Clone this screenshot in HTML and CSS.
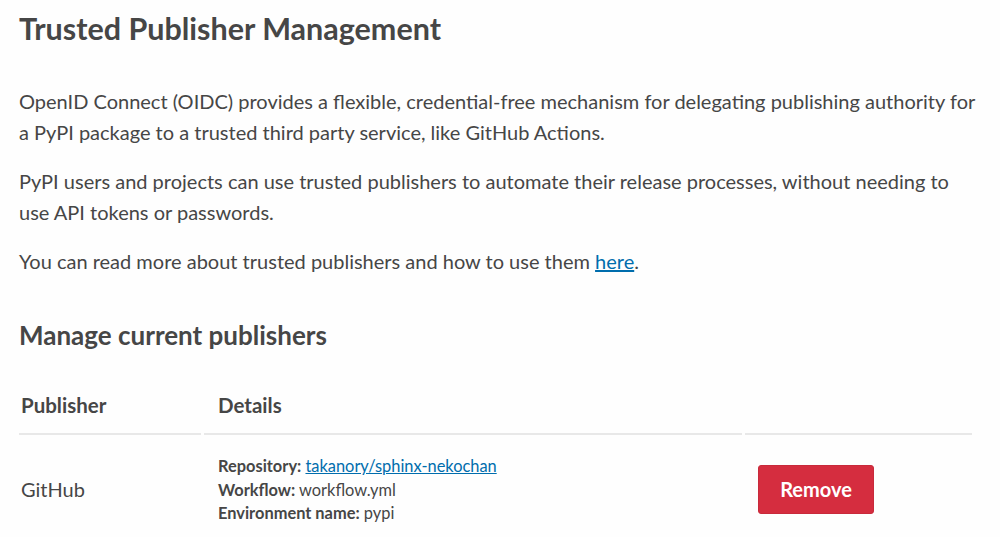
FILE: index.html
```html
<!DOCTYPE html>
<html>
<head>
<meta charset="utf-8">
<link rel="stylesheet" href="styles.css">
</head>
<body>
<main class="page">
  <h1 class="title">Trusted Publisher Management</h1>
  <p class="text">OpenID Connect (OIDC) provides a flexible, credential-free mechanism for delegating publishing authority for a PyPI package to a trusted third party service, like GitHub Actions.</p>
  <p class="text">PyPI users and projects can use trusted publishers to automate their release processes, without needing to use API tokens or passwords.</p>
  <p class="text">You can read more about trusted publishers and how to use them <a class="link" href="#">here</a>.</p>
  <h2 class="subtitle">Manage current publishers</h2>
  <table class="table">
    <thead>
      <tr>
        <th class="col-pub">Publisher</th>
        <th class="col-det">Details</th>
        <th class="col-act"></th>
      </tr>
    </thead>
    <tbody>
      <tr>
        <td class="cell-pub">GitHub</td>
        <td class="cell-det">
          <div><strong>Repository:</strong> <a class="link" href="#">takanory/sphinx-nekochan</a></div>
          <div><strong>Workflow:</strong> workflow.yml</div>
          <div><strong>Environment name:</strong> pypi</div>
        </td>
        <td class="cell-act"><button class="btn-danger">Remove</button></td>
      </tr>
    </tbody>
  </table>
</main>
</body>
</html>
```
FILE: styles.css
```css
html, body {
  margin: 0;
  padding: 0;
  background: #fefefe;
}
body {
  font-family: Lato, "Source Sans Pro", "Liberation Sans", sans-serif;
  color: #464646;
}
.page {
  width: 962px;
  margin-left: 19px;
  padding-top: 8px;
}
.title {
  font-size: 30.5px;
  font-weight: 700;
  line-height: 40px;
  margin: 0 0 38px 0;
}
.text {
  font-size: 20px;
  line-height: 31px;
  margin: 0 0 18px 0;
}
.link {
  color: #006dad;
  text-decoration: underline;
}
.subtitle {
  font-size: 26px;
  font-weight: 700;
  line-height: 34px;
  margin: 41px 0 41px 0;
}
.table {
  width: 959px;
  border-collapse: separate;
  border-spacing: 3px 0;
  margin-left: -3px;
}
.table th {
  text-align: left;
  font-size: 20.5px;
  font-weight: 700;
  padding: 0 2px 16px 2px;
  border-bottom: 2px solid #e8e8e8;
  line-height: 24px;
}
.table th.col-det { padding-left: 14px; }
.col-pub { width: 178px; }
.col-det { width: 522px; }
.cell-pub {
  font-size: 20px;
  padding: 0 2px;
  vertical-align: middle;
}
.cell-det {
  font-size: 16.4px;
  line-height: 23.5px;
  padding: 19px 2px 19px 14px;
  vertical-align: middle;
}
.cell-det strong { font-weight: 700; }
.cell-act {
  vertical-align: middle;
  padding: 0 0 0 13px;
}
.btn-danger {
  font-family: inherit;
  background: #d52d3f;
  color: #fff;
  border: 1px solid #c82a3b;
  border-radius: 3px;
  font-size: 20px;
  font-weight: 700;
  width: 116px;
  height: 49px;
  cursor: pointer;
}
```
